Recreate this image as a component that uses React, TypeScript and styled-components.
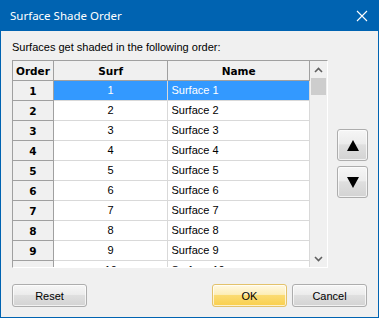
import React from "react";
import styled, { createGlobalStyle } from "styled-components";

const Global = createGlobalStyle`
  html, body { margin: 0; padding: 0; background: #fff; }
  * { box-sizing: border-box; }
`;

const Window = styled.div`
  width: 379px;
  height: 318px;
  background: #f0f0f0;
  border: 1px solid #0063b1;
  border-top: none;
  display: flex;
  flex-direction: column;
  font-family: "Liberation Sans", Arial, sans-serif;
  font-size: 11px;
  color: #000;
  overflow: hidden;
`;

const TitleBar = styled.div`
  height: 31px;
  margin: 0 -1px;
  background: #0063b1;
  color: #fff;
  display: flex;
  align-items: center;
  justify-content: space-between;
  padding: 0 10px 0 10px;
  font-family: "Noto Sans", sans-serif;
  font-size: 11.5px;
`;

const Close = styled.svg`
  width: 12px;
  height: 12px;
  margin-right: 1px;
`;

const Body = styled.div`
  flex: 1;
  padding: 9px 11px 0 11px;
  display: flex;
  flex-direction: column;
`;

const Label = styled.div`
  line-height: 15px;
  height: 15px;
  margin-bottom: 5px;
`;

const Middle = styled.div`
  display: flex;
  align-items: flex-start;
`;

const GridBox = styled.div`
  width: 316px;
  height: 208px;
  border-top: 1px solid #a0a0a0;
  border-left: 1px solid #a0a0a0;
  border-right: 1px solid #fff;
  border-bottom: 1px solid #fff;
  display: flex;
  background: #fff;
`;

const Table = styled.div`
  width: 298px;
  overflow: hidden;
  display: flex;
  flex-direction: column;
`;

const Row = styled.div`
  display: flex;
  height: 20px;
  flex-shrink: 0;
`;

const HeadCell = styled.div<{ w: number }>`
  width: ${(p) => p.w}px;
  height: 20px;
  background: #f0f0f0;
  border-right: 1px solid #a0a0a0;
  border-bottom: 1px solid #a0a0a0;
  font-family: "DejaVu Sans", sans-serif;
  font-weight: bold;
  font-size: 10.5px;
  display: flex;
  align-items: center;
  justify-content: center;
`;

const OrderCell = styled(HeadCell)`
  padding-top: 1px;
`;

const Cell = styled.div<{ w: number; selected?: boolean; center?: boolean }>`
  width: ${(p) => p.w}px;
  height: 20px;
  background: ${(p) => (p.selected ? "#3399ff" : "#fff")};
  color: ${(p) => (p.selected ? "#fff" : "#000")};
  border-right: 1px solid #d9d9d9;
  border-bottom: 1px solid #d9d9d9;
  display: flex;
  align-items: center;
  justify-content: ${(p) => (p.center ? "center" : "flex-start")};
  padding-left: ${(p) => (p.center ? 0 : 3)}px;
  padding-bottom: 1px;
`;

const ScrollBar = styled.div`
  width: 17px;
  background: #f0f0f0;
  display: flex;
  flex-direction: column;
  align-items: center;
`;

const ScrollArrow = styled.div`
  height: 17px;
  width: 17px;
  display: flex;
  align-items: center;
  justify-content: center;
`;

const Thumb = styled.div`
  width: 15px;
  height: 17px;
  background: #cdcdcd;
`;

const Track = styled.div`
  flex: 1;
`;

const SideButtons = styled.div`
  display: flex;
  flex-direction: column;
  gap: 5px;
  margin-left: 9px;
  margin-top: 69px;
`;

const Button = styled.button<{ primary?: boolean; w?: number; h?: number }>`
  width: ${(p) => p.w ?? 75}px;
  height: ${(p) => p.h ?? 23}px;
  padding: 0;
  border: 1px solid ${(p) => (p.primary ? "#e3c26b" : "#adadad")};
  border-radius: 3px;
  font-family: "Liberation Sans", Arial, sans-serif;
  font-size: 11px;
  color: #000;
  display: flex;
  align-items: center;
  justify-content: center;
  background: ${(p) =>
    p.primary
      ? "linear-gradient(#fff8e2 0%, #fdeeb9 45%, #fbdb72 50%, #f9cf4d 100%)"
      : "linear-gradient(#f6f6f6 0%, #ececec 45%, #dfdfdf 50%, #d3d3d3 100%)"};
  box-shadow: inset 0 0 0 1px rgba(255, 255, 255, 0.7);
`;

const Footer = styled.div`
  display: flex;
  margin-top: 16px;
  gap: 5px;
`;

const Spacer = styled.div`
  flex: 1;
`;

const rows = Array.from({ length: 10 }, (_, i) => i + 1);

const Chevron = ({ up }: { up?: boolean }) => (
  <svg width="9" height="6" viewBox="0 0 9 6">
    <path
      d={up ? "M1 5 L4.5 1.5 L8 5" : "M1 1 L4.5 4.5 L8 1"}
      fill="none"
      stroke="#606060"
      strokeWidth="1.6"
    />
  </svg>
);

const Tri = ({ up }: { up?: boolean }) => (
  <svg width="12" height="11" viewBox="0 0 12 11">
    <path d={up ? "M6 0 L12 11 L0 11 Z" : "M0 0 L12 0 L6 11 Z"} fill="#000" />
  </svg>
);

export default function App() {
  return (
    <Window>
      <Global />
      <TitleBar>
        <span>Surface Shade Order</span>
        <Close viewBox="0 0 12 12">
          <path d="M1 1 L11 11 M11 1 L1 11" stroke="#fff" strokeWidth="1.1" />
        </Close>
      </TitleBar>
      <Body>
        <Label>Surfaces get shaded in the following order:</Label>
        <Middle>
          <GridBox>
            <Table>
              <Row>
                <HeadCell w={41}>Order</HeadCell>
                <HeadCell w={115}>Surf</HeadCell>
                <HeadCell w={142}>Name</HeadCell>
              </Row>
              {rows.map((n) => (
                <Row key={n}>
                  <OrderCell w={41}>{n}</OrderCell>
                  <Cell w={115} center selected={n === 1}>
                    {n}
                  </Cell>
                  <Cell w={142} selected={n === 1}>
                    Surface {n}
                  </Cell>
                </Row>
              ))}
            </Table>
            <ScrollBar>
              <ScrollArrow>
                <Chevron up />
              </ScrollArrow>
              <Thumb />
              <Track />
              <ScrollArrow>
                <Chevron />
              </ScrollArrow>
            </ScrollBar>
          </GridBox>
          <SideButtons>
            <Button w={31} h={32}>
              <Tri up />
            </Button>
            <Button w={31} h={32}>
              <Tri />
            </Button>
          </SideButtons>
        </Middle>
        <Footer>
          <Button>Reset</Button>
          <Spacer />
          <Button primary>OK</Button>
          <Button>Cancel</Button>
        </Footer>
      </Body>
    </Window>
  );
}
